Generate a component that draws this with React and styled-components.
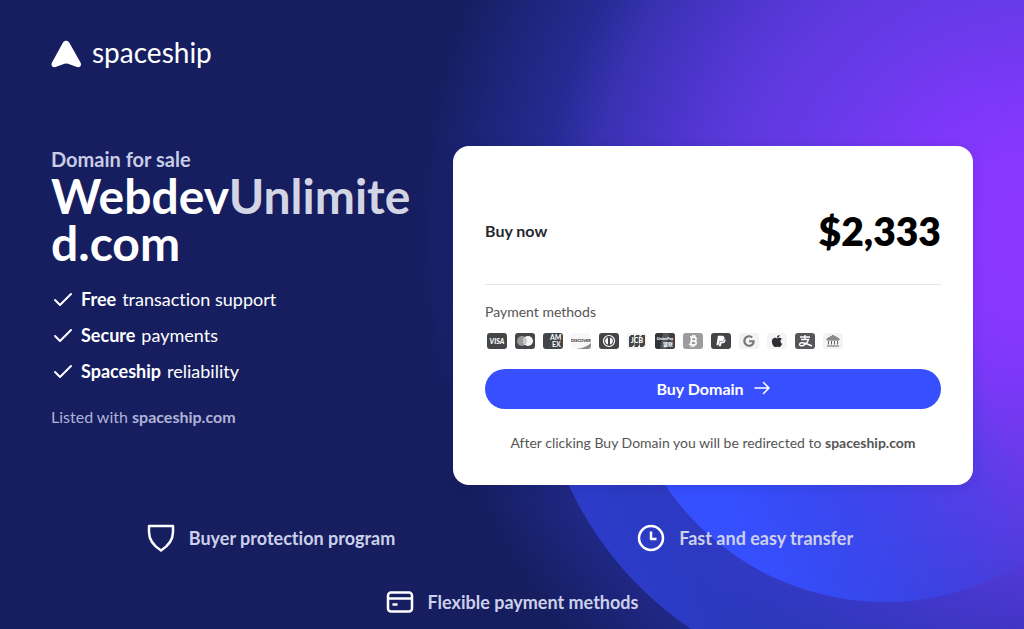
import React from 'react';
import styled, { createGlobalStyle } from 'styled-components';
import { FaApple, FaGoogle, FaPaypal } from 'react-icons/fa';

const GlobalStyle = createGlobalStyle`
  * {
    box-sizing: border-box;
  }

  body {
    margin: 0;
    background: #161e60;
    font-family: 'Lato', 'Open Sans', sans-serif;
    font-variant-ligatures: no-common-ligatures;
  }
`;

const Page = styled.div`
  position: relative;
  min-height: 100vh;
  overflow: hidden;
  color: white;
  background: #161e60;
`;

const Backdrop = styled.svg`
  position: absolute;
  top: 0;
  right: 0;
  width: 100%;
  height: 100%;
`;

const Container = styled.div`
  position: relative;
  padding: 40px 51px 0;
`;

const Logo = styled.a`
  display: flex;
  align-items: center;
  gap: 10px;
  width: fit-content;
  color: white;
  font-size: 28px;
  line-height: 28px;
  text-decoration: none;
`;

const Wordmark = styled.span`
  padding-bottom: 4px;
  line-height: 24px;
`;

const Main = styled.main`
  display: grid;
  grid-template-columns: minmax(0, 1fr) 520px;
  gap: 40px;
  margin-top: 78px;
`;

const Kicker = styled.p`
  margin: 0;
  font-size: 20px;
  line-height: 26px;
  font-weight: 700;
  color: #c9cce6;
`;

const Title = styled.h1`
  margin: 0;
  font-size: 48px;
  line-height: 47px;
  font-weight: 700;
  word-break: break-all;
`;

const Faded = styled.span`
  color: #d3d5e5;
`;

const Benefits = styled.ul`
  display: grid;
  gap: 12px;
  margin: 21px 0 0;
  padding: 0;
  list-style: none;
  font-size: 18px;
  line-height: 24px;
`;

const Benefit = styled.li`
  display: flex;
  align-items: center;
  gap: 6px;
`;

const Listed = styled.p`
  margin: 23px 0 0;
  font-size: 16px;
  line-height: 22px;
  color: #b0b3d6;
`;

const Card = styled.section`
  padding: 56px 32px 32px;
  border-radius: 16px;
  background: white;
  color: #555;
  box-shadow: 0 2px 12px rgba(20, 24, 90, 0.15);
`;

const PriceRow = styled.div`
  display: flex;
  align-items: center;
  justify-content: space-between;
  padding-bottom: 24px;
  border-bottom: 1px solid #e6e6e6;
`;

const Label = styled.span`
  font-size: 16px;
  line-height: 20px;
  font-weight: 700;
  color: #26282f;
`;

const Price = styled.span`
  font-size: 39px;
  line-height: 58px;
  font-weight: 800;
  color: black;
`;

const Small = styled.p`
  margin: ${props => props.$top}px 0 0;
  font-size: 14px;
  line-height: 20px;
  text-align: ${props => (props.$center ? 'center' : 'left')};
`;

const Methods = styled.div`
  display: flex;
  gap: 8px;
  margin: 11px 2px 0;
`;

const BuyButton = styled.button`
  display: flex;
  align-items: center;
  justify-content: center;
  gap: 10px;
  width: 100%;
  height: 40px;
  margin-top: 20px;
  padding: 0 0 2px;
  border: 0;
  border-radius: 20px;
  background: #384fff;
  color: white;
  font: inherit;
  font-size: 16px;
  font-weight: 700;
  cursor: pointer;
`;

const Features = styled.ul`
  display: flex;
  flex-wrap: wrap;
  justify-content: center;
  gap: 36px 242px;
  margin: 39px 0 0;
  padding: 0 0 12px;
  list-style: none;
`;

const Feature = styled.li`
  display: flex;
  align-items: center;
  gap: 14px;
  min-width: 240px;
  font-size: 18px;
  line-height: 28px;
  font-weight: 700;
  color: #cdd0ea;
`;

const Check = () => (
  <svg width="24" height="24" viewBox="0 0 24 24" fill="none" stroke="white" strokeWidth="2" strokeLinecap="round" strokeLinejoin="round">
    <path d="M4 13l5 5L20 7" />
  </svg>
);

const Glow = () => (
  <Backdrop viewBox="0 0 1024 629" preserveAspectRatio="xMaxYMin slice" aria-hidden="true">
    <defs>
      <radialGradient id="glow" gradientUnits="userSpaceOnUse" cx="1030" cy="236" r="612">
        <stop offset="0" stopColor="#8b36ff" />
        <stop offset="0.12" stopColor="#8937ff" />
        <stop offset="0.25" stopColor="#7a38f6" />
        <stop offset="0.38" stopColor="#683ae8" />
        <stop offset="0.48" stopColor="#5f39e0" />
        <stop offset="0.56" stopColor="#5437d4" />
        <stop offset="0.66" stopColor="#4333c0" />
        <stop offset="0.72" stopColor="#3831b0" />
        <stop offset="0.8" stopColor="#232b92" />
        <stop offset="0.9" stopColor="#1c257a" />
        <stop offset="1" stopColor="#161e60" />
      </radialGradient>
      <linearGradient id="outer" gradientUnits="userSpaceOnUse" x1="640" y1="600" x2="1010" y2="440">
        <stop offset="0" stopColor="#2c3cc8" />
        <stop offset="1" stopColor="#2c3cc8" stopOpacity="0" />
      </linearGradient>
      <linearGradient id="inner" gradientUnits="userSpaceOnUse" x1="740" y1="520" x2="1010" y2="420">
        <stop offset="0" stopColor="#364fff" />
        <stop offset="1" stopColor="#364fff" stopOpacity="0" />
      </linearGradient>
      <clipPath id="lower">
        <rect y="300" width="1024" height="329" />
      </clipPath>
    </defs>
    <rect width="1024" height="629" fill="url(#glow)" />
    <g clipPath="url(#lower)">
      <circle cx="885" cy="340" r="348" fill="url(#outer)" />
      <circle cx="885" cy="337" r="265" fill="url(#inner)" />
    </g>
  </Backdrop>
);

const MethodIcon = ({ name, fill = '#444548', children }) => (
  <svg width="20" height="16" viewBox="0 0 20 16" role="img" aria-label={name}>
    <rect width="20" height="16" rx="3" fill={fill} />
    {children}
  </svg>
);

const PaymentIcons = () => (
  <Methods>
    <MethodIcon name="Visa">
      <text x="10" y="11" textAnchor="middle" fontSize="7" fontWeight="900" fontStyle="italic" fill="white">VISA</text>
    </MethodIcon>
    <MethodIcon name="Mastercard">
      <circle cx="7" cy="8" r="5" fill="#9a9a9c" />
      <circle cx="13" cy="8" r="5" fill="#f4f4f4" />
      <path d="M10 4a5 5 0 0 1 0 8a5 5 0 0 1 0-8z" fill="#c8c8c8" />
    </MethodIcon>
    <MethodIcon name="American Express">
      <g fontSize="7" fontWeight="700" fill="white">
        <text x="7" y="7">AM</text>
        <text x="9" y="14">EX</text>
      </g>
    </MethodIcon>
    <MethodIcon name="Discover" fill="#f7f7f7">
      <path d="M5 16q10-1 15-6v3a3 3 0 0 1-3 3z" fill="#8a8a8c" />
      <text x="10" y="9" textAnchor="middle" fontSize="4" fontWeight="900" fill="#333">DISCOVER</text>
    </MethodIcon>
    <MethodIcon name="Diners Club">
      <circle cx="10" cy="8" r="5.5" fill="none" stroke="white" strokeWidth="1.2" />
      <path d="M9 4.5a3.600 3.600 0 0 0 0 7zM11 4.500a3.600 3.600 0 0 1 0 7z" fill="white" />
    </MethodIcon>
    <MethodIcon name="JCB" fill="#f5f5f5">
      <path d="M4 2h3v10l-2 2H2V4zM9.500 2h3v10l-2 2h-3V4zM15 2h3v10l-2 2h-3V4z" fill="#444548" />
      <text x="10" y="10" textAnchor="middle" fontSize="7" fontWeight="900" fill="white">JCB</text>
    </MethodIcon>
    <MethodIcon name="UnionPay" fill="#55565a">
      <path d="M3 0h5L5 16H3a3 3 0 0 1-3-3V3a3 3 0 0 1 3-3z" fill="#333438" />
      <path d="M14 0h3a3 3 0 0 1 3 3v10a3 3 0 0 1-3 3h-6z" fill="#3e3f43" />
      <text x="10" y="7" textAnchor="middle" fontSize="4" fontWeight="900" fontStyle="italic" fill="white">UnionPay</text>
      <text x="13" y="13" textAnchor="middle" fontSize="5" fontWeight="700" fontFamily="'Noto Sans CJK SC', sans-serif" fill="white">银联</text>
    </MethodIcon>
    <MethodIcon name="Bitcoin" fill="#9c9c9e">
      <g transform="rotate(8 10 8)" fill="none" stroke="white" strokeWidth="1.6">
        <path d="M6.500 4.200h4.500a1.800 1.800 0 0 1 0 3.700H8.500h3a1.900 1.900 0 0 1 0 3.900H6.500M8.300 4v8M9 2v2M11 2v2M9 12v2M11 12v2" />
      </g>
    </MethodIcon>
    <MethodIcon name="PayPal">
      <FaPaypal x="4" y="2" size={12} color="white" />
    </MethodIcon>
    <MethodIcon name="Google Pay" fill="#f3f3f3">
      <FaGoogle x="4" y="2" size={12} color="#77787a" />
    </MethodIcon>
    <MethodIcon name="Apple Pay" fill="#f5f5f5">
      <FaApple x="3" y="1" size={14} color="#2e2f33" />
    </MethodIcon>
    <MethodIcon name="Alipay" fill="#55565a">
      <path d="M5 4h10M10 2v4.500M6 6.500h7.500Q12 11 8 12.500Q4.500 13.500 4.500 11.200Q5 9.300 8 9.800Q12 10.800 17 13" fill="none" stroke="white" strokeWidth="1.4" />
    </MethodIcon>
    <MethodIcon name="Bank transfer" fill="#f3f3f3">
      <path d="M10 2.500L4 5.800V7h12V5.800zM5.500 8v3.500M8.500 8v3.500M11.500 8v3.500M14.500 8v3.500M4 13h12" fill="none" stroke="#66676a" />
      <path d="M10 2.500L4 5.800V7h12V5.800z" fill="#8a8b8e" />
    </MethodIcon>
  </Methods>
);

const FeatureIcon = ({ children }) => (
  <svg width="28" height="28" viewBox="0 0 28 28" fill="none" stroke="white" strokeWidth="2.5" strokeLinejoin="round">
    {children}
  </svg>
);

const App = () => (
  <Page>
    <GlobalStyle />
    <Glow />
    <Container>
      <Logo href="#">
        <svg width="31" height="28" viewBox="0 0 31 28" fill="white">
          <path d="M12 2.500C13.500.3 16.700.3 18.200 2.500L29.500 22.500C31 25.500 29 27.800 26 27L17 23.800Q15.200 23.300 13.500 23.800L4.500 27C1.500 27.800-.5 25.500 1 22.500Z" />
        </svg>
        <Wordmark>spaceship</Wordmark>
      </Logo>
      <Main>
        <div>
          <Kicker>Domain for sale</Kicker>
          <Title>Webdev<Faded>Unlimite</Faded>d.com</Title>
          <Benefits>
            <Benefit><Check /><b>Free</b> transaction support</Benefit>
            <Benefit><Check /><b>Secure</b> payments</Benefit>
            <Benefit><Check /><b>Spaceship</b> reliability</Benefit>
          </Benefits>
          <Listed>Listed with <b>spaceship.com</b></Listed>
        </div>
        <Card>
          <PriceRow>
            <Label>Buy now</Label>
            <Price>$2,333</Price>
          </PriceRow>
          <Small $top={17}>Payment methods</Small>
          <PaymentIcons />
          <BuyButton>
            Buy Domain
            <svg width="16" height="14" viewBox="0 0 16 14" fill="none" stroke="white" strokeWidth="1.5" strokeLinecap="round" strokeLinejoin="round">
              <path d="M1 7h14M9.500 1.500L15 7l-5.500 5.500" />
            </svg>
          </BuyButton>
          <Small $top={24} $center>
            After clicking Buy Domain you will be redirected to <b>spaceship.com</b>
          </Small>
        </Card>
      </Main>
      <Features>
        <Feature>
          <FeatureIcon>
            <path d="M2 2h24v6c0 8-5 14-12 18.500C7 22 2 16 2 8z" />
          </FeatureIcon>
          Buyer protection program
        </Feature>
        <Feature>
          <FeatureIcon>
            <circle cx="14" cy="14" r="12" />
            <path d="M14 7.500V15h5.500" />
          </FeatureIcon>
          Fast and easy transfer
        </Feature>
        <Feature>
          <FeatureIcon>
            <rect x="2" y="4.500" width="24" height="19" rx="3" />
            <path d="M2 10.500h24M6.500 16.500h5" />
          </FeatureIcon>
          Flexible payment methods
        </Feature>
      </Features>
    </Container>
  </Page>
);

export default App;
